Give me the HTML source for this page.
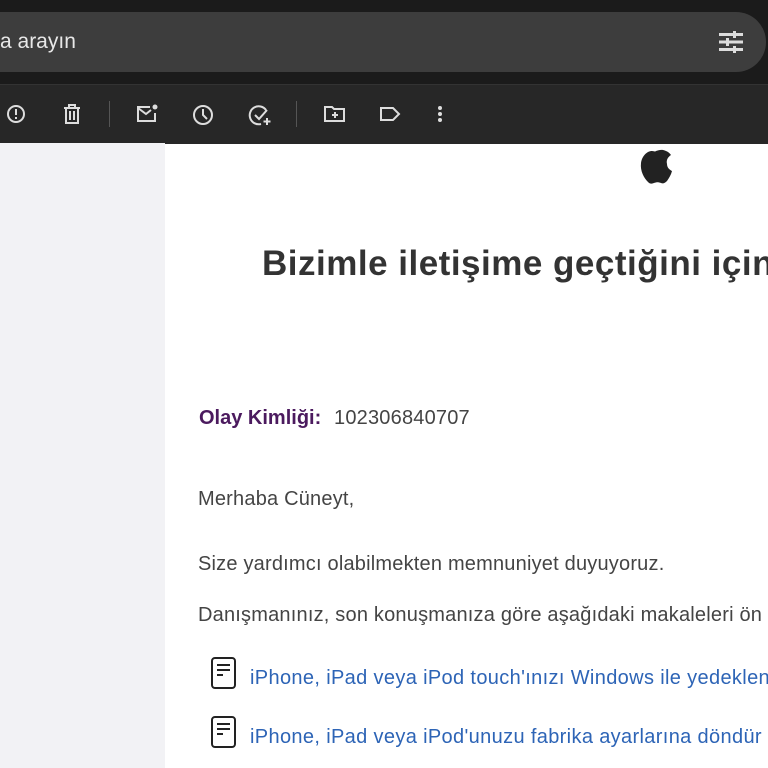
<!DOCTYPE html>
<html><head><meta charset="utf-8"><style>
body{margin:0;width:768px;height:768px;overflow:hidden;background:#fff;font-family:"Liberation Sans","DejaVu Sans",sans-serif;position:relative}
.top{position:absolute;left:0;top:0;width:768px;height:84px;background:#1b1b1b}
.search{position:absolute;left:-40px;top:12px;width:806px;height:60px;border-radius:30px;background:#3d3d3d}
.search span{position:absolute;left:40px;top:18px;color:#e8e8e8;font-size:21px}
.tb{position:absolute;left:0;top:84px;width:768px;height:59px;background:#272727;border-top:1px solid #333}
.ic{position:absolute;top:19px}
.sep{position:absolute;top:16px;width:1px;height:26px;background:#555}
.side{position:absolute;left:0;top:143px;width:165px;height:625px;background:#f2f2f5}
.t{position:absolute;white-space:nowrap}
.link{color:#2d64b6;font-size:20px;letter-spacing:0.35px}
.b{font-size:20px;color:#444;letter-spacing:0.2px}
</style></head><body>
<div class="top"><div class="search"><span>a arayın</span></div>
<svg style="position:absolute;left:719px;top:31px" width="24" height="22" viewBox="0 0 24 22" fill="#ddd"><rect x="0" y="2" width="24" height="3"/><rect x="0" y="9.5" width="24" height="3"/><rect x="0" y="17" width="24" height="3"/><rect x="14" y="0" width="3" height="7"/><rect x="7" y="7" width="3" height="8"/><rect x="14" y="15" width="3" height="7"/></svg>
</div>
<div class="tb">
<svg class="ic" style="left:6px" width="20" height="20" viewBox="0 0 20 20" fill="none" stroke="#ddd" stroke-width="2"><circle cx="10" cy="10" r="8"/><line x1="10" y1="5" x2="10" y2="11"/><line x1="10" y1="13" x2="10" y2="15"/></svg>
<svg class="ic" style="left:63px" width="18" height="20" viewBox="0 0 18 20" fill="none" stroke="#ddd" stroke-width="2"><path d="M1 4h16M6 4V1h6v3M3 4v15h12V4M7 7v9M11 7v9"/></svg>
<div class="sep" style="left:109px"></div>
<svg class="ic" style="left:136px" width="22" height="20" viewBox="0 0 22 20" fill="none" stroke="#ddd" stroke-width="2"><path d="M14 3H2v14h17V9"/><path d="M2 4l8 6 5-4"/><circle cx="19" cy="3" r="2.5" fill="#ddd" stroke="none"/></svg>
<svg class="ic" style="left:192px" width="22" height="22" viewBox="0 0 22 22" fill="none" stroke="#ddd" stroke-width="2"><circle cx="11" cy="11" r="9"/><path d="M11 5v6l4 4"/></svg>
<svg class="ic" style="left:248px" width="24" height="22" viewBox="0 0 24 22" fill="none" stroke="#ddd" stroke-width="2"><path d="M18 6A9 9 0 1 0 13 20"/><path d="M7 11l4 4 8-9M19 14v7M15.5 17.5h7"/></svg>
<div class="sep" style="left:296px"></div>
<svg class="ic" style="left:324px" width="22" height="20" viewBox="0 0 22 20" fill="none" stroke="#ddd" stroke-width="2"><path d="M1 3h7l2 2h10v12H1z"/><path d="M11 8v6M8 11h6"/></svg>
<svg class="ic" style="left:379px" width="22" height="20" viewBox="0 0 22 20" fill="none" stroke="#ddd" stroke-width="2"><path d="M2 4h12l6 6-6 6H2z"/></svg>
<svg class="ic" style="left:437px" width="6" height="20" viewBox="0 0 6 20" fill="#ddd"><circle cx="3" cy="4" r="2"/><circle cx="3" cy="10" r="2"/><circle cx="3" cy="16" r="2"/></svg>
</div>
<div class="side"></div>
<svg style="position:absolute;left:635px;top:141px" width="42" height="44" viewBox="0 0 42 44"><path d="M21 10c3-1 6-2 10 0 3 1 5 4 5 4-3 2-5 5-4 9 0 4 3 6 5 7-1 4-3 7-5 10-2 2-4 3-6 2-3-1-4-1-7 0-3 1-4 1-6-1C9 37 5 30 6 22c1-7 6-12 11-12 2 0 3 1 4 0z" fill="#222"/></svg>
<div class="t" style="left:262px;top:244px;font-size:35px;font-weight:bold;color:#333;letter-spacing:0.5px">Bizimle iletişime geçtiğini için</div>
<div class="t" style="left:199px;top:407px;font-size:20px;font-weight:bold;color:#4b1a5e">Olay Kimliği:</div>
<div class="t b" style="left:334px;top:407px">102306840707</div>
<div class="t b" style="left:198px;top:488px">Merhaba Cüneyt,</div>
<div class="t b" style="left:198px;top:553px">Size yardımcı olabilmekten memnuniyet duyuyoruz.</div>
<div class="t b" style="left:198px;top:604px">Danışmanınız, son konuşmanıza göre aşağıdaki makaleleri ön</div>
<svg style="position:absolute;left:211px;top:657px" width="26" height="32" viewBox="0 0 26 32" fill="none" stroke="#222" stroke-width="2"><rect x="1" y="1" width="23" height="30" rx="3"/><path d="M6 8h13M6 13h13M6 18h6"/></svg>
<div class="t link" style="left:250px;top:667px">iPhone, iPad veya iPod touch'ınızı Windows ile yedeklen</div>
<svg style="position:absolute;left:211px;top:716px" width="26" height="32" viewBox="0 0 26 32" fill="none" stroke="#222" stroke-width="2"><rect x="1" y="1" width="23" height="30" rx="3"/><path d="M6 8h13M6 13h13M6 18h6"/></svg>
<div class="t link" style="left:250px;top:726px">iPhone, iPad veya iPod'unuzu fabrika ayarlarına döndür</div>
</body></html>
